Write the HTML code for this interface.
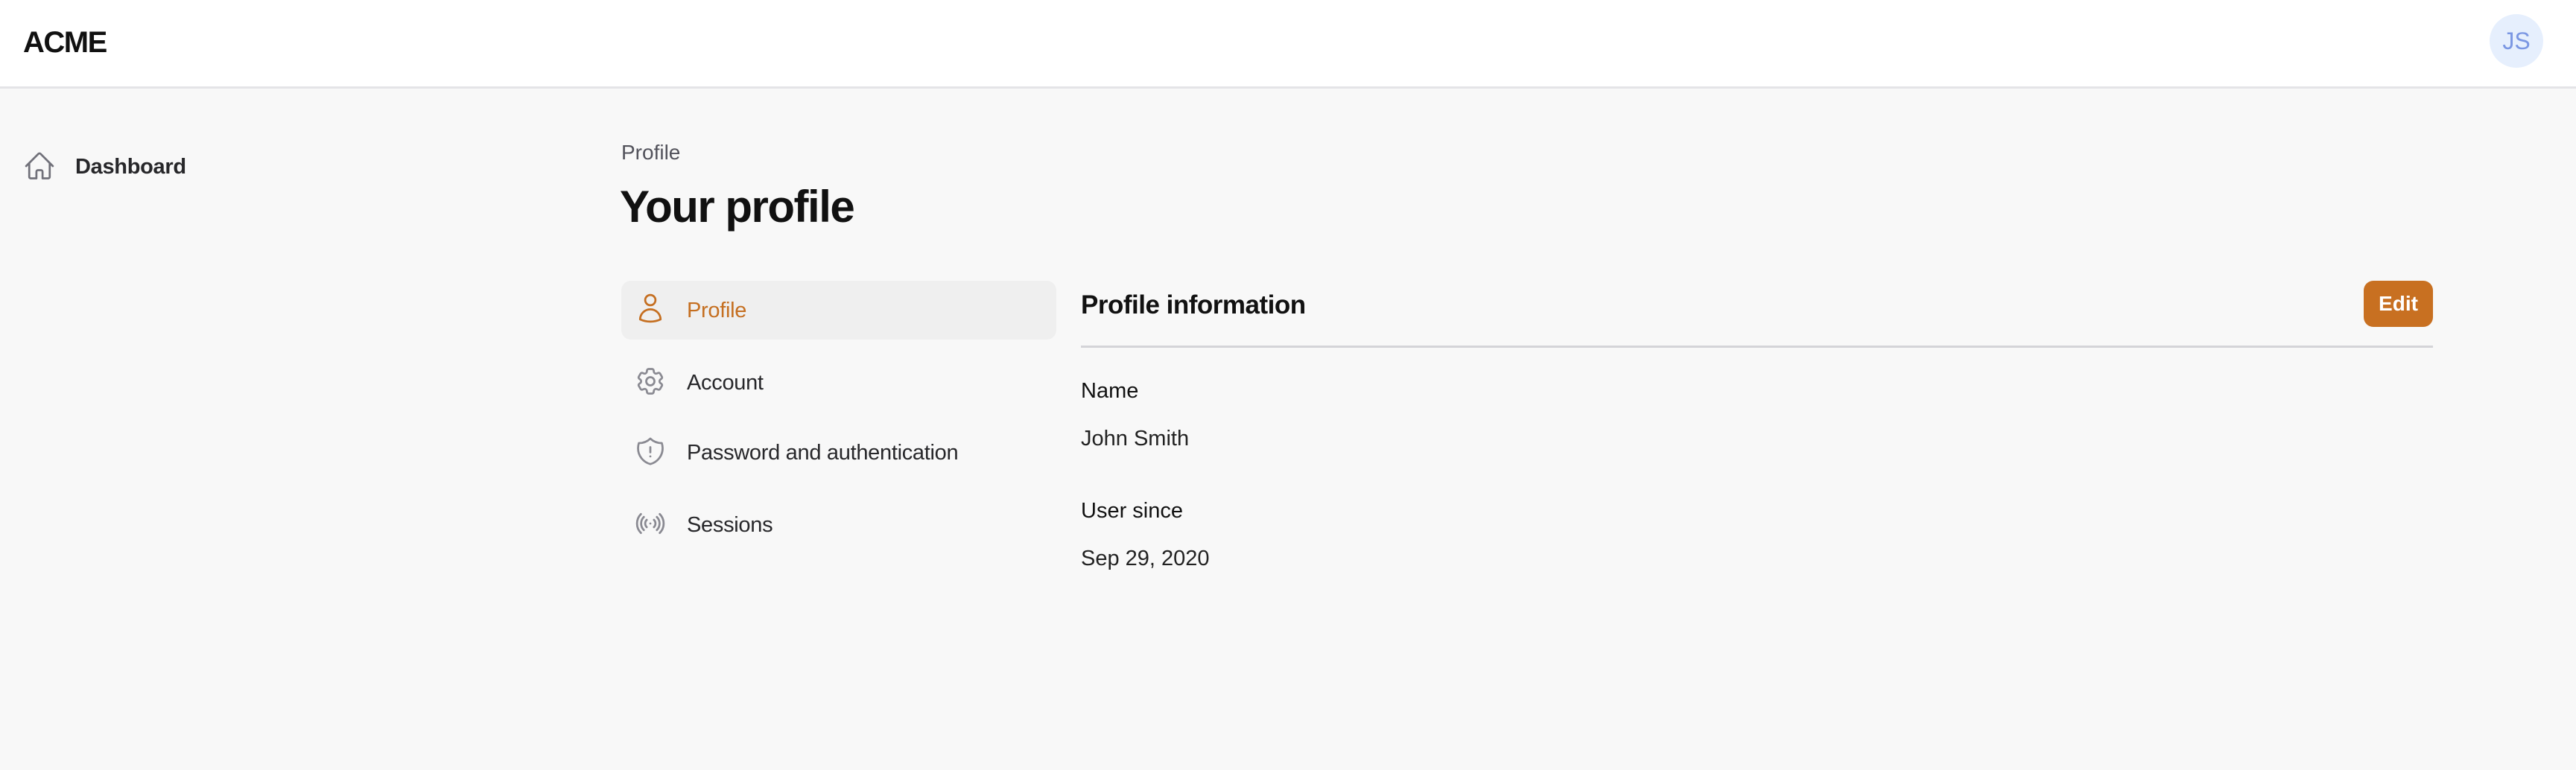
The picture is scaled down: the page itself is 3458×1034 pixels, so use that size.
<!DOCTYPE html>
<html><head><meta charset="utf-8"><style>
*{margin:0;padding:0;box-sizing:border-box}
body{width:3458px;height:1034px;background:#f8f8f8;font-family:"Liberation Sans",sans-serif;color:#111;position:relative;overflow:hidden}
.hdr{position:absolute;left:0;top:0;width:3458px;height:119px;background:#fff;border-bottom:3px solid #e4e4e7}
.a{position:absolute;white-space:nowrap}
svg{position:absolute;fill:none;stroke-width:1.5;stroke-linecap:round;stroke-linejoin:round}
</style></head><body>
<div class="hdr"></div>
<div class="a" style="left:31px;top:35px;font-size:40px;font-weight:bold;letter-spacing:-1.5px">ACME</div>
<div class="a" style="left:3342px;top:19px;width:72px;height:72px;border-radius:50%;background:#e6effd;color:#7b97e3;font-size:32px;line-height:72px;text-align:center;font-weight:300">JS</div>

<svg style="left:31px;top:201px" width="44" height="44" viewBox="0 0 24 24" stroke="#71717a"><path d="M2.25 12l8.954-8.955a1.126 1.126 0 011.591 0L21.75 12M4.5 9.75v10.125c0 .621.504 1.125 1.125 1.125H9.75v-4.875c0-.621.504-1.125 1.125-1.125h2.25c.621 0 1.125.504 1.125 1.125V21h4.125c.621 0 1.125-.504 1.125-1.125V9.75"/></svg>
<div class="a" style="left:101px;top:208px;font-size:29px;font-weight:bold;color:#27272a;letter-spacing:-0.3px">Dashboard</div>

<div class="a" style="left:834px;top:189px;font-size:28px;color:#52525b">Profile</div>
<div class="a" style="left:832px;top:243px;font-size:60px;font-weight:bold;letter-spacing:-1.5px">Your profile</div>

<div class="a" style="left:834px;top:377px;width:584px;height:79px;border-radius:13px;background:#efefef"></div>
<svg style="left:851px;top:392px" width="44" height="44" viewBox="0 0 24 24" stroke="#c56f21"><path d="M15.75 6a3.75 3.75 0 11-7.5 0 3.75 3.75 0 017.5 0zM4.501 20.118a7.5 7.5 0 0114.998 0A17.933 17.933 0 0112 21.75c-2.676 0-5.216-.584-7.499-1.632z"/></svg>
<div class="a" style="left:922px;top:401px;font-size:29px;color:#c56f21;letter-spacing:-0.3px">Profile</div>

<svg style="left:851px;top:490px" width="44" height="44" viewBox="0 0 24 24" stroke="#8a8a92"><path d="M9.594 3.94c.09-.542.56-.94 1.11-.94h2.593c.55 0 1.02.398 1.11.94l.213 1.281c.063.374.313.686.645.87.074.04.147.083.22.127.324.196.72.257 1.075.124l1.217-.456a1.125 1.125 0 011.37.49l1.296 2.247a1.125 1.125 0 01-.26 1.431l-1.003.827c-.293.24-.438.613-.431.992a6.759 6.759 0 010 .255c-.007.378.138.75.43.99l1.005.828c.424.35.534.954.26 1.43l-1.298 2.247a1.125 1.125 0 01-1.369.491l-1.217-.456c-.355-.133-.75-.072-1.076.124a6.57 6.57 0 01-.22.128c-.331.183-.581.495-.644.869l-.213 1.28c-.09.543-.56.941-1.11.941h-2.594c-.55 0-1.020-.398-1.110-.94l-.213-1.281c-.062-.374-.312-.686-.644-.87a6.52 6.52 0 01-.22-.127c-.325-.196-.72-.257-1.076-.124l-1.217.456a1.125 1.125 0 01-1.369-.49l-1.297-2.247a1.125 1.125 0 01.26-1.431l1.004-.827c.292-.24.437-.613.43-.992a6.932 6.932 0 010-.255c.007-.378-.138-.75-.43-.99l-1.004-.828a1.125 1.125 0 01-.26-1.430l1.297-2.247a1.125 1.125 0 011.370-.491l1.216.456c.356.133.751.072 1.076-.124.072-.044.146-.087.22-.128.332-.183.582-.495.644-.869l.214-1.281z"/><path d="M15 12a3 3 0 11-6 0 3 3 0 016 0z"/></svg>
<div class="a" style="left:922px;top:498px;font-size:29px;color:#27272a;letter-spacing:-0.3px">Account</div>

<svg style="left:851px;top:584px" width="44" height="44" viewBox="0 0 24 24" stroke="#8a8a92"><path d="M12 9v3.75M12 15.75h.008M12 2.714A11.959 11.959 0 013.598 6 11.99 11.99 0 003 9.749c0 5.592 3.824 10.29 9 11.623 5.176-1.332 9-6.03 9-11.622 0-1.310-.210-2.571-.598-3.751h-.152c-3.196 0-6.1-1.248-8.25-3.285z"/></svg>
<div class="a" style="left:922px;top:592px;font-size:29px;color:#27272a;letter-spacing:-0.3px">Password and authentication</div>

<svg style="left:851px;top:681px" width="44" height="44" viewBox="0 0 24 24" stroke="#8a8a92"><path d="M9.348 14.651a3.75 3.75 0 010-5.303m5.304 0a3.75 3.75 0 010 5.303m-7.425 2.122a6.75 6.75 0 010-9.546m9.546 0a6.75 6.75 0 010 9.546M5.106 18.894c-3.808-3.808-3.808-9.980 0-13.789m13.788 0c3.808 3.808 3.808 9.981 0 13.790M12 12h.008v.007H12V12z"/></svg>
<div class="a" style="left:922px;top:689px;font-size:29px;color:#27272a;letter-spacing:-0.3px">Sessions</div>

<div class="a" style="left:1451px;top:390px;font-size:35px;font-weight:bold;color:#111;letter-spacing:-0.5px">Profile information</div>
<div class="a" style="left:3173px;top:377px;width:93px;height:62px;border-radius:13px;background:#c87021;color:#fff;font-size:28px;font-weight:bold;line-height:62px;text-align:center">Edit</div>
<div class="a" style="left:1451px;top:464px;width:1815px;height:3px;background:#d4d4d8"></div>

<div class="a" style="left:1451px;top:509px;font-size:29px;color:#111">Name</div>
<div class="a" style="left:1451px;top:573px;font-size:29px;color:#222">John Smith</div>
<div class="a" style="left:1451px;top:670px;font-size:29px;color:#111">User since</div>
<div class="a" style="left:1451px;top:734px;font-size:29px;color:#222">Sep 29, 2020</div>
</body></html>
